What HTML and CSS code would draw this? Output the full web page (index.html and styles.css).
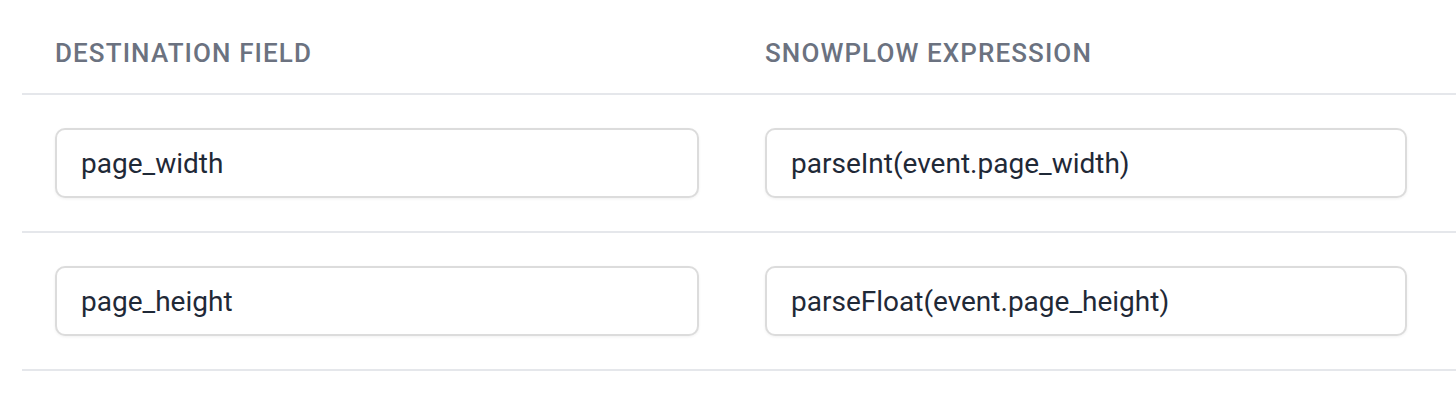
FILE: index.html
```html
<!DOCTYPE html>
<html>
<head>
<meta charset="utf-8">
<link rel="stylesheet" href="styles.css">
</head>
<body>
<div class="table">
  <div class="row head">
    <div class="cell th">Destination field</div>
    <div class="cell th">Snowplow expression</div>
    <div class="cell"></div>
  </div>
  <div class="row">
    <div class="cell"><div class="input">page_width</div></div>
    <div class="cell"><div class="input">parseInt(event.page_width)</div></div>
    <div class="cell"></div>
  </div>
  <div class="row">
    <div class="cell"><div class="input">page_height</div></div>
    <div class="cell"><div class="input">parseFloat(event.page_height)</div></div>
    <div class="cell"></div>
  </div>
</div>
</body>
</html>
```
FILE: styles.css
```css
html, body {
  margin: 0;
  padding: 0;
  background: #ffffff;
}
body {
  font-family: Roboto, "Liberation Sans", sans-serif;
  overflow: hidden;
}
.table {
  margin-left: 22px;
}
.row {
  display: grid;
  grid-template-columns: 710px 708px 1fr;
  border-bottom: 2px solid #e5e7eb;
}
.row.head {
  height: 93px;
}
.cell {
  padding: 33px 33px;
}
.row.head .cell {
  padding: 0 33px;
  display: flex;
  align-items: center;
  padding-top: 13px;
}
.th {
  font-size: 26px;
  font-weight: 500;
  text-transform: uppercase;
  letter-spacing: 1.1px;
  color: #6b7280;
}
.input {
  box-sizing: border-box;
  height: 70px;
  border: 2px solid #dcdcdc;
  border-radius: 10px;
  box-shadow: 0 1px 3px rgba(0, 0, 0, 0.06);
  padding: 0 24px;
  display: flex;
  align-items: center;
  font-size: 28px;
  color: #1f2937;
  background: #fff;
}
```
